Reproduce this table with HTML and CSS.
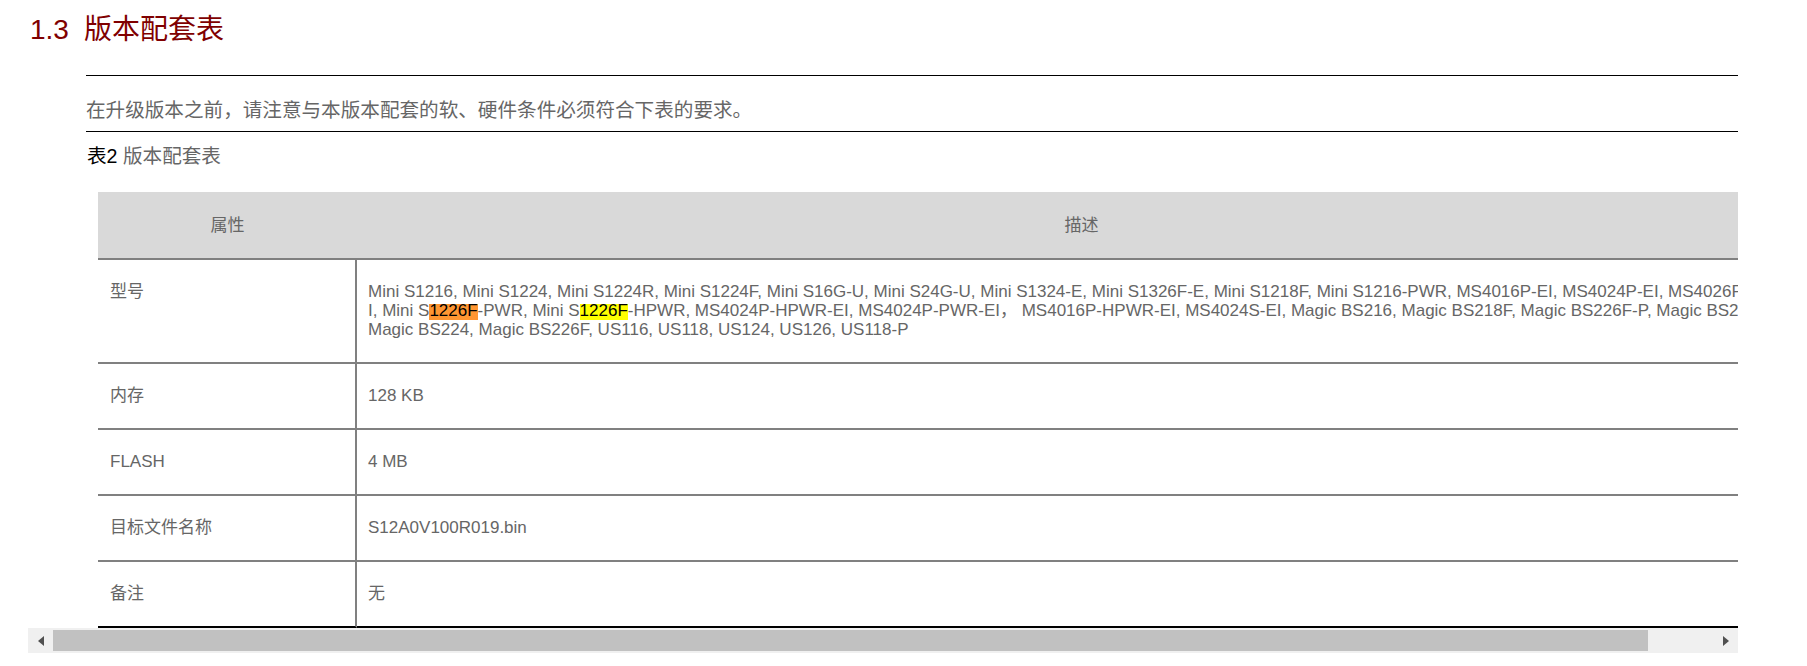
FILE: index.html
```html
<!DOCTYPE html>
<html lang="zh-CN">
<head>
    <meta charset="UTF-8">
    <meta name="viewport" content="width=device-width, initial-scale=1.0">
    <title>版本配套表</title>
    <link rel="stylesheet" href="styles.css">
</head>
<body>
    <h2 class="section-title"><span class="section-num">1.3</span>版本配套表</h2>
    <div class="note">在升级版本之前，请注意与本版本配套的软、硬件条件必须符合下表的要求。</div>
    <p class="table-caption"><span class="caption-no">表2</span> 版本配套表</p>
    <div class="table-box">
        <div class="table-wrap">
            <table class="match-table">
                <colgroup>
                    <col class="col-attr">
                    <col>
                </colgroup>
                <thead>
                    <tr>
                        <th>属性</th>
                        <th>描述</th>
                    </tr>
                </thead>
                <tbody>
                    <tr>
                        <td>型号</td>
                        <td>Mini S1216, Mini S1224, Mini S1224R, Mini S1224F, Mini S16G-U, Mini S24G-U, Mini S1324-E, Mini S1326F-E, Mini S1218F, Mini S1216-PWR, MS4016P-EI, MS4024P-EI, MS4026P-EI, Mini S<mark class="hit hit-active">1226F</mark>-PWR, Mini S<mark class="hit">1226F</mark>-HPWR, MS4024P-HPWR-EI, MS4024P-PWR-EI， MS4016P-HPWR-EI, MS4024S-EI, Magic BS216, Magic BS218F, Magic BS226F-P, Magic BS26, Magic BS224, Magic BS226F, US116, US118, US124, US126, US118-P</td>
                    </tr>
                    <tr>
                        <td>内存</td>
                        <td>128 KB</td>
                    </tr>
                    <tr>
                        <td>FLASH</td>
                        <td>4 MB</td>
                    </tr>
                    <tr>
                        <td>目标文件名称</td>
                        <td>S12A0V100R019.bin</td>
                    </tr>
                    <tr>
                        <td>备注</td>
                        <td>无</td>
                    </tr>
                </tbody>
            </table>
        </div>
        <div class="hscroll">
            <span class="hscroll-btn"><span class="arrow arrow-left"></span></span>
            <div class="hscroll-track">
                <div class="hscroll-thumb" style="width: 96.1%"></div>
            </div>
            <span class="hscroll-btn"><span class="arrow arrow-right"></span></span>
        </div>
    </div>
</body>
</html>
```

FILE: styles.css
```css
body {
    margin: 0;
    background: #fff;
    color: #666;
    font-family: "Liberation Sans", Arial, "Noto Sans CJK SC", sans-serif;
}
.section-title {
    margin: 12px 0 0 30px;
    font-size: 28px;
    line-height: 36px;
    font-weight: normal;
    color: #800000;
}
.section-num {
    margin-right: 15px;
}
.note {
    margin: 27px 69px 0 86px;
    padding: 22px 0 9px;
    border-top: 1px solid #000;
    border-bottom: 1px solid #000;
    font-size: 19.6px;
    line-height: 24px;
}
.table-caption {
    margin: 12px 0 0 87px;
    font-size: 19.6px;
    line-height: 24px;
}
.caption-no {
    color: #000;
}
.table-box {
    margin: 24px 69px 0 28px;
}
.table-wrap {
    padding-left: 70px;
    overflow: hidden;
}
.hscroll {
    display: flex;
    height: 25px;
    background: #f0f0f0;
}
.hscroll-btn {
    display: flex;
    align-items: center;
    justify-content: center;
    width: 25px;
    flex: none;
}
.arrow {
    width: 0;
    height: 0;
    border-top: 5.5px solid transparent;
    border-bottom: 5.5px solid transparent;
}
.arrow-left {
    border-right: 6px solid #505050;
}
.arrow-right {
    border-left: 6px solid #505050;
}
.hscroll-track {
    flex: 1;
    padding: 2px 0;
}
.hscroll-thumb {
    height: 21px;
    background: #c1c1c1;
}
.match-table {
    width: 1708px;
    table-layout: fixed;
    border-collapse: separate;
    border-spacing: 0;
    font-size: 17px;
    line-height: 19px;
}
.col-attr {
    width: 259px;
}
.match-table th {
    padding: 24px 12px 23px;
    background: #d9d9d9;
    border-bottom: 2px solid #808080;
    font-weight: normal;
}
.match-table td {
    padding: 21.5px 40px 23.5px 12px;
    vertical-align: top;
    border-bottom: 2px solid #808080;
    word-break: break-all;
}
.match-table td:first-child {
    border-right: 2px solid #808080;
}
.match-table td + td {
    padding-left: 11px;
}
.match-table tr:last-child td {
    border-bottom-color: #000;
}
.hit {
    color: #000;
    background: linear-gradient(to bottom, transparent 3px, #ffff00 3px);
}
.hit-active {
    background: linear-gradient(to bottom, transparent 3px, #ff9632 3px);
}
```
